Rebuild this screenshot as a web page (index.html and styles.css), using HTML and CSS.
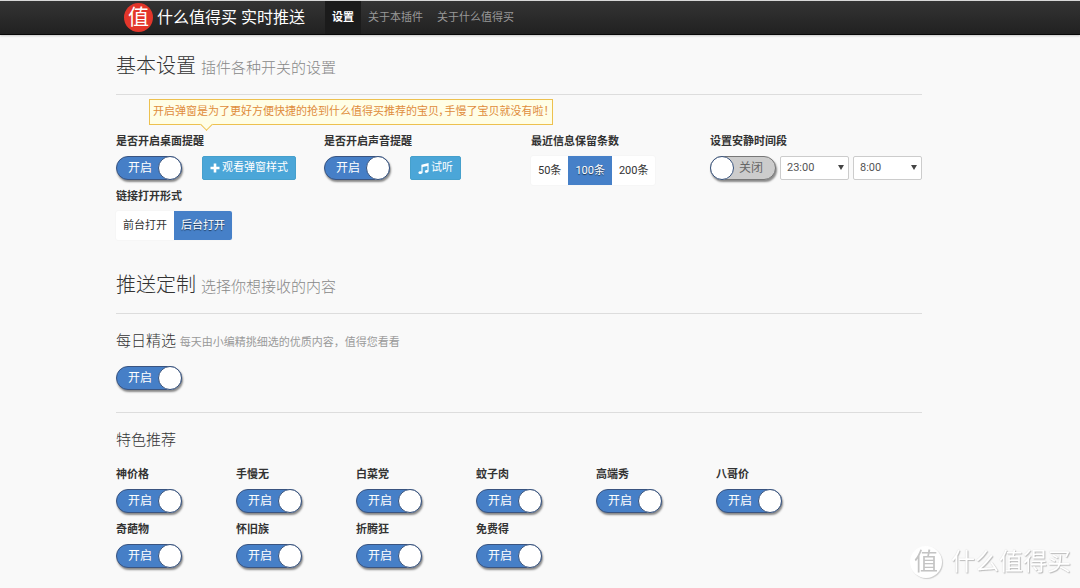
FILE: index.html
```html
<!DOCTYPE html>
<html lang="zh-CN">
<head>
<meta charset="utf-8">
<title>什么值得买 实时推送</title>
<link rel="stylesheet" href="styles.css">
</head>
<body>
<header class="navbar">
  <a class="brand" href="#"><span class="brand-logo">值</span><span>什么值得买 实时推送</span></a>
  <nav class="nav">
    <a class="nav-link active" href="#">设置</a>
    <a class="nav-link" href="#">关于本插件</a>
    <a class="nav-link" href="#">关于什么值得买</a>
  </nav>
</header>

<main class="container">
  <section>
    <h1 class="page-header">基本设置 <small>插件各种开关的设置</small></h1>
    <div class="fields basic">
      <div class="field">
        <p class="tip">开启弹窗是为了更好方便快捷的抢到什么值得买推荐的宝贝，手慢了宝贝就没有啦！</p>
        <label class="title" for="desktop">是否开启桌面提醒</label>
        <div class="controls spaced">
          <label class="switch"><input type="checkbox" id="desktop" checked><span class="knob"></span></label>
          <button class="btn" type="button"><svg width="10" height="10" viewBox="0 0 10 10"><path d="M3.7 .5h2.6v3.2h3.2v2.6H6.3v3.2H3.7V6.3H.5V3.7h3.2z"/></svg>观看弹窗样式</button>
        </div>
      </div>
      <div class="field">
        <label class="title" for="sound">是否开启声音提醒</label>
        <div class="controls spaced">
          <label class="switch"><input type="checkbox" id="sound" checked><span class="knob"></span></label>
          <button class="btn" type="button"><svg width="11" height="11" viewBox="0 0 11 11"><path d="M3.4 1.7 10.6 0v8.1c0 1-.9 1.7-2 1.7S6.8 9.300 6.800 8.500c0-.8.9-1.400 2-1.400l.6.1V3L4.600 4.100v5.200c0 1-.9 1.700-2.100 1.700C1.300 11 .4 10.500.4 9.700c0-.8.9-1.400 2.100-1.400l.9.1z"/></svg>试听</button>
        </div>
      </div>
      <fieldset class="field">
        <legend class="title">最近信息保留条数</legend>
        <div class="segments">
          <label class="segment"><input type="radio" name="count">50条</label>
          <label class="segment"><input type="radio" name="count" checked>100条</label>
          <label class="segment"><input type="radio" name="count">200条</label>
        </div>
      </fieldset>
      <div class="field">
        <label class="title" for="quiet">设置安静时间段</label>
        <div class="controls">
          <label class="switch"><input type="checkbox" id="quiet"><span class="knob"></span></label>
          <span class="select"><select aria-label="开始时间"><option>23:00</option></select></span>
          <span class="select"><select aria-label="结束时间"><option>8:00</option></select></span>
        </div>
      </div>
      <fieldset class="field">
        <legend class="title">链接打开形式</legend>
        <div class="segments">
          <label class="segment"><input type="radio" name="open">前台打开</label>
          <label class="segment"><input type="radio" name="open" checked>后台打开</label>
        </div>
      </fieldset>
    </div>
  </section>

  <section>
    <h1 class="page-header">推送定制 <small>选择你想接收的内容</small></h1>
    <div class="group">
      <h2 class="group-title">每日精选 <small>每天由小编精挑细选的优质内容，值得您看看</small></h2>
      <label class="switch"><input type="checkbox" aria-label="每日精选" checked><span class="knob"></span></label>
    </div>
    <div class="group">
      <h2 class="group-title">特色推荐</h2>
      <div class="fields topics">
        <div class="field"><label class="title" for="t1">神价格</label><label class="switch"><input type="checkbox" id="t1" checked><span class="knob"></span></label></div>
        <div class="field"><label class="title" for="t2">手慢无</label><label class="switch"><input type="checkbox" id="t2" checked><span class="knob"></span></label></div>
        <div class="field"><label class="title" for="t3">白菜党</label><label class="switch"><input type="checkbox" id="t3" checked><span class="knob"></span></label></div>
        <div class="field"><label class="title" for="t4">蚊子肉</label><label class="switch"><input type="checkbox" id="t4" checked><span class="knob"></span></label></div>
        <div class="field"><label class="title" for="t5">高端秀</label><label class="switch"><input type="checkbox" id="t5" checked><span class="knob"></span></label></div>
        <div class="field"><label class="title" for="t6">八哥价</label><label class="switch"><input type="checkbox" id="t6" checked><span class="knob"></span></label></div>
        <div class="field"><label class="title" for="t7">奇葩物</label><label class="switch"><input type="checkbox" id="t7" checked><span class="knob"></span></label></div>
        <div class="field"><label class="title" for="t8">怀旧族</label><label class="switch"><input type="checkbox" id="t8" checked><span class="knob"></span></label></div>
        <div class="field"><label class="title" for="t9">折腾狂</label><label class="switch"><input type="checkbox" id="t9" checked><span class="knob"></span></label></div>
        <div class="field"><label class="title" for="t10">免费得</label><label class="switch"><input type="checkbox" id="t10" checked><span class="knob"></span></label></div>
      </div>
    </div>
  </section>
</main>

<div class="watermark"><span class="watermark-logo">值</span><span>什么值得买</span></div>
</body>
</html>
```

FILE: styles.css
```css
* { box-sizing: border-box; }

body {
  margin: 0;
  background: #f9f9f9;
  color: #333;
  font: 11px/20px Roboto, "Noto Sans CJK SC", sans-serif;
}

a { color: inherit; text-decoration: none; }

/* top bar */
.navbar {
  display: flex;
  gap: 20px;
  height: 35px;
  padding: 0 124px;
  background: linear-gradient(#343434, #212121);
  border-top: 1px solid #d8d8d8;
  border-bottom: 1px solid #080808;
  box-shadow: 0 1px 2px rgba(0, 0, 0, .2);
}
.brand {
  display: flex;
  align-items: center;
  gap: 4px;
  color: #fff;
  font-size: 16px;
}
.brand-logo {
  width: 29px;
  height: 29px;
  border-radius: 50%;
  background: #e3362b;
  font-size: 21px;
  font-style: oblique 6deg;
  line-height: 28px;
  text-align: center;
}
.nav { display: flex; }
.nav-link {
  display: flex;
  align-items: center;
  padding: 0 7px;
  color: #999;
}
.nav-link.active {
  background: #1b1b1b;
  color: #fff;
  font-weight: 700;
}

/* layout */
.container { padding: 0 158px 10px 116px; }
.page-header {
  margin: 21px 0 0;
  padding-bottom: 18px;
  border-bottom: 1px solid #ddd;
  font-size: 20px;
  font-weight: 300;
  line-height: 20px;
}
.page-header small { font-size: 15px; line-height: 1; color: #888; }
.fields { display: grid; }
.basic {
  grid-template-columns: 208fr 207fr 179fr 212fr;
  margin: 37px 0 33px;
}
.topics { grid-template-columns: repeat(6, 120px); }
.field {
  position: relative;
  min-width: 0;
  min-height: 55px;
  margin: 0;
  padding: 0;
  border: 0;
}
.title {
  display: block;
  margin-bottom: 4px;
  padding: 0;
  line-height: 20px;
  font-weight: 700;
}
.controls { display: flex; gap: 4px; }
.controls.spaced { gap: 20px; }

.group { padding-top: 17px; }
.group + .group {
  margin-top: 22px;
  border-top: 1px solid #ddd;
}
.group-title {
  margin: 0 0 15px;
  font-size: 15px;
  font-weight: 300;
  line-height: 20px;
}
.group-title small { font-size: 11px; font-weight: 400; line-height: 1; color: #999; }

/* on/off switch */
.switch {
  position: relative;
  display: block;
  flex: none;
  width: 66px;
  height: 24px;
  border: 1px solid #777;
  border-radius: 12px;
  background: #ccc;
  box-shadow: 1px 2px 2px rgba(0, 0, 0, .45);
  color: #666;
  font-size: 12px;
  line-height: 22px;
}
.switch input {
  position: absolute;
  inset: 0;
  margin: 0;
  opacity: 0;
}
.switch::before {
  content: "关闭";
  display: block;
  padding-left: 28px;
}
.knob {
  position: absolute;
  top: -1px;
  left: -1px;
  width: 24px;
  height: 24px;
  border: 1px solid #37527c;
  border-radius: 50%;
  background: #fff;
}
.switch:has(:checked) {
  border-color: #3a5480;
  background: #467fc7;
  color: #fff;
}
.switch:has(:checked)::before { content: "开启"; padding-left: 11px; }
.switch:has(:checked) .knob { left: auto; right: -1px; }

/* buttons and choices */
.btn {
  display: flex;
  align-items: center;
  gap: 2px;
  height: 24px;
  padding: 0 7px;
  border: 1px solid #46a0cc;
  border-radius: 2px;
  background: #4ba6d8;
  color: #fff;
  font: inherit;
}
.btn svg { fill: #fff; }
.segments {
  display: inline-flex;
  border-radius: 2px;
  background: #fff;
  box-shadow: 0 0 2px rgba(0, 0, 0, .06);
}
.segment {
  position: relative;
  padding: 0 7px;
  line-height: 29px;
}
.segment input {
  position: absolute;
  inset: 0;
  margin: 0;
  opacity: 0;
}
.segment:has(:checked) {
  background: #4680c8;
  color: #fff;
  text-shadow: 0 1px 1px rgba(0, 0, 0, .6);
}
.segment:last-child { border-radius: 0 2px 2px 0; }

.select { position: relative; width: 69px; }
.select select {
  appearance: none;
  width: 100%;
  height: 24px;
  padding: 0 6px;
  border: 1px solid #ccc;
  border-radius: 2px;
  background: #fff;
  color: #555;
  font: inherit;
}
.select::after {
  content: "";
  position: absolute;
  top: 9px;
  right: 5px;
  border: 3px solid transparent;
  border-top: 5px solid #444;
  border-bottom: 0;
  pointer-events: none;
}

/* callout above the first switch */
.tip {
  position: absolute;
  bottom: calc(100% + 7px);
  left: 33px;
  margin: 0;
  padding: 2px 3px;
  border: 1px solid #edc14f;
  background: #fffee6;
  color: #e08c3c;
  line-height: 20px;
  white-space: nowrap;
  font-feature-settings: "palt";
}
.tip::after {
  content: "";
  position: absolute;
  top: 100%;
  left: 52px;
  width: 8px;
  height: 8px;
  margin-top: -4px;
  border: solid #edc14f;
  border-width: 0 1px 1px 0;
  background: #fffee6;
  transform: rotate(45deg);
}

.watermark {
  position: fixed;
  right: 9px;
  bottom: 10px;
  display: flex;
  align-items: center;
  gap: 9px;
  color: #fff;
  font-size: 24px;
  line-height: 32px;
  text-shadow: 1px 1px 1px #bbb, 0 0 1px #ccc;
}
.watermark-logo {
  width: 32px;
  height: 32px;
  border-radius: 50%;
  background: #fff;
  box-shadow: 1px 1px 1px #ccc;
  color: #c4c4c4;
  font-style: oblique 6deg;
  text-align: center;
  text-shadow: none;
}
```
